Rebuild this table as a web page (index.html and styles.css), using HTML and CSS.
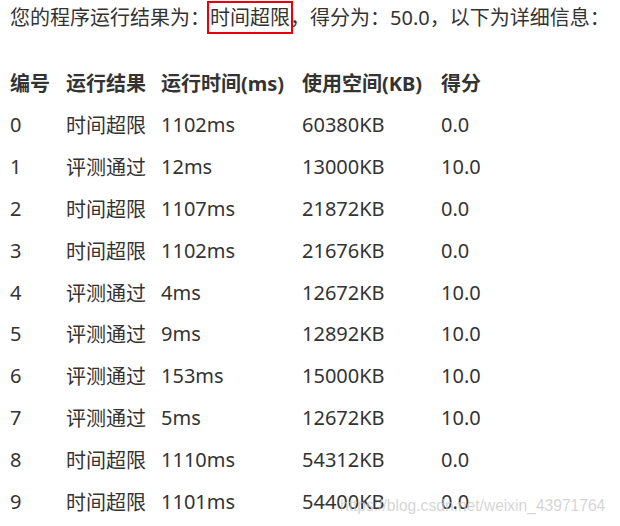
FILE: index.html
```html
<!DOCTYPE html>
<html lang="zh-CN">
<head>
  <meta charset="UTF-8">
  <title>评测结果</title>
  <link rel="stylesheet" href="styles.css">
</head>
<body>
  <p class="summary">您的程序运行结果为：<span class="verdict">时间超限</span>，得分为：50.0，以下为详细信息：</p>

  <div class="results">
    <div class="row head">
      <span>编号</span><span>运行结果</span><span>运行时间(ms)</span><span>使用空间(KB)</span><span>得分</span>
    </div>
    <div class="row"><span>0</span><span>时间超限</span><span>1102ms</span><span>60380KB</span><span>0.0</span></div>
    <div class="row"><span>1</span><span>评测通过</span><span>12ms</span><span>13000KB</span><span>10.0</span></div>
    <div class="row"><span>2</span><span>时间超限</span><span>1107ms</span><span>21872KB</span><span>0.0</span></div>
    <div class="row"><span>3</span><span>时间超限</span><span>1102ms</span><span>21676KB</span><span>0.0</span></div>
    <div class="row"><span>4</span><span>评测通过</span><span>4ms</span><span>12672KB</span><span>10.0</span></div>
    <div class="row"><span>5</span><span>评测通过</span><span>9ms</span><span>12892KB</span><span>10.0</span></div>
    <div class="row"><span>6</span><span>评测通过</span><span>153ms</span><span>15000KB</span><span>10.0</span></div>
    <div class="row"><span>7</span><span>评测通过</span><span>5ms</span><span>12672KB</span><span>10.0</span></div>
    <div class="row"><span>8</span><span>时间超限</span><span>1110ms</span><span>54312KB</span><span>0.0</span></div>
    <div class="row"><span>9</span><span>时间超限</span><span>1101ms</span><span>54400KB</span><span>0.0</span></div>
  </div>

  <div class="watermark">https://blog.csdn.net/weixin_43971764</div>
</body>
</html>
```

FILE: styles.css
```css
body {
  margin: 0;
  padding: 0 10px;
  font-family: "Noto Sans", "Noto Sans CJK SC", sans-serif;
  font-size: 20px;
  color: #333;
  background: #fff;
  overflow: hidden;
  height: 526px;
  position: relative;
}
.summary {
  margin: 0;
  height: 36px;
  line-height: 36px;
}
.verdict {
  border: 2px solid #e8000b;
  padding: 1px 1px;
  margin: 0 -3px;
}
.results {
  margin-top: 26px;
}
.row {
  display: grid;
  grid-template-columns: 56px 95px 141px 139px auto;
  height: 41.85px;
  align-items: center;
}
.head {
  font-weight: bold;
}
.watermark {
  position: absolute;
  left: 340px;
  top: 497px;
  font-family: "Liberation Sans", Arial, sans-serif;
  font-size: 15.6px;
  color: rgba(200, 200, 200, 0.75);
}
```
